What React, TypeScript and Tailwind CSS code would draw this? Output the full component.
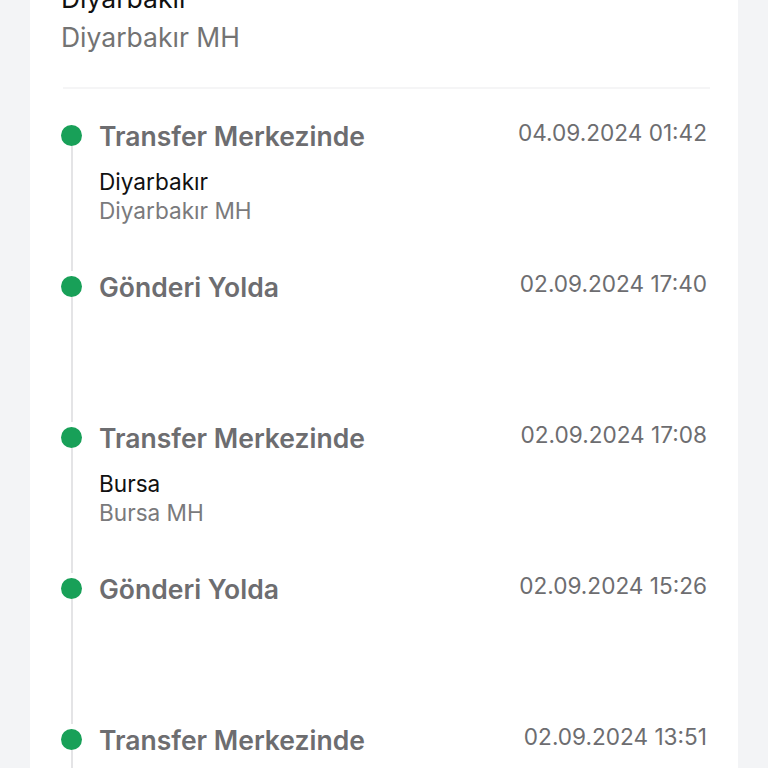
import React from "react";

type Item = { title: string; date: string; city?: string; hub?: string };

const items: Item[] = [
  { title: "Transfer Merkezinde", date: "04.09.2024 01:42", city: "Diyarbakır", hub: "Diyarbakır MH" },
  { title: "Gönderi Yolda", date: "02.09.2024 17:40" },
  { title: "Transfer Merkezinde", date: "02.09.2024 17:08", city: "Bursa", hub: "Bursa MH" },
  { title: "Gönderi Yolda", date: "02.09.2024 15:26" },
  { title: "Transfer Merkezinde", date: "02.09.2024 13:51" },
];

export default function App() {
  return (
    <div
      className="h-[768px] w-[768px] overflow-hidden bg-[#f3f4f6] px-[30px]"
      style={{ fontFamily: "Inter, 'Noto Sans', sans-serif" }}
    >
      <div className="flex h-full flex-col bg-white pl-[31px] pr-[31px]">
        <div className="-mt-[19px]">
          <div className="mb-[5px] text-[26.5px] leading-[34px] text-[#111]">Diyarbakır</div>
          <div className="text-[26.5px] leading-[34px] text-[#737373]">Diyarbakır MH</div>
        </div>
        <div className="ml-[2px] mr-[-3px] mt-[33px] h-[2px] shrink-0 bg-[#f5f5f6]" />
        <div className="mt-[31px]">
          {items.map((it, i) => (
            <div key={i} className="flex h-[151px]">
              <div className="flex w-[21px] flex-col items-center pt-[5px]">
                <div className="h-[21px] w-[21px] shrink-0 rounded-full bg-[#18a058]" />
                <div className="w-[2px] flex-1 bg-[#e4e4e6]" />
              </div>
              <div className="ml-[17px] flex-1">
                <div className="flex items-start justify-between">
                  <div className="text-[26.5px] font-semibold leading-[32px] text-[#6d6d70]">{it.title}</div>
                  <div className="-mt-[1px] text-[22.6px] leading-[28px] text-[#6d6d70]">{it.date}</div>
                </div>
                {it.city && (
                  <div className="mt-[15px]">
                    <div className="text-[22.6px] leading-[29px] text-[#111]">{it.city}</div>
                    <div className="text-[22.6px] leading-[29px] text-[#7a7a7c]">{it.hub}</div>
                  </div>
                )}
              </div>
            </div>
          ))}
        </div>
      </div>
    </div>
  );
}
